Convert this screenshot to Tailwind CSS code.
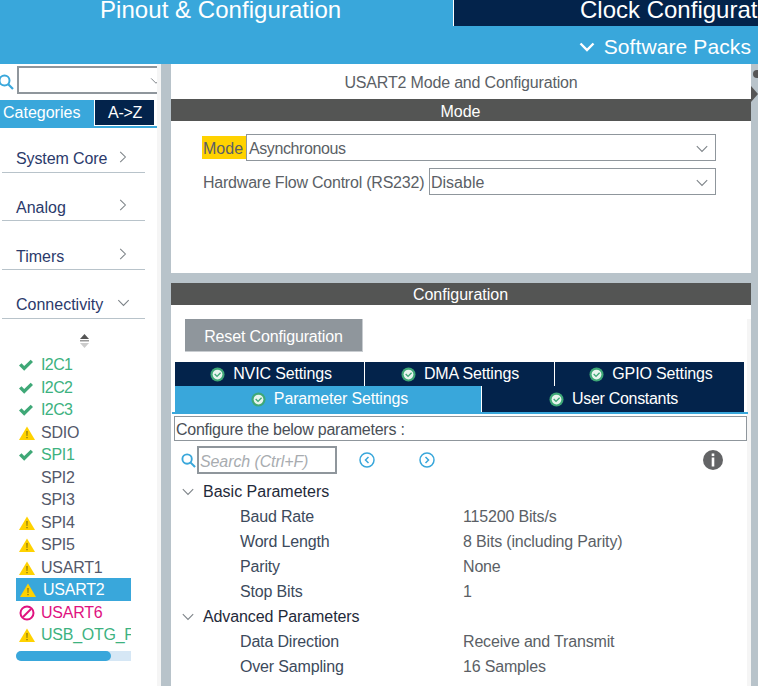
<!DOCTYPE html>
<html lang="en">
<head>
<meta charset="UTF-8">
<title>USART2 Mode and Configuration</title>
<script src="https://cdn.jsdelivr.net/npm/@tailwindcss/browser@4"></script>
</head>
<body class="w-[758px] h-[686px] overflow-hidden bg-white font-['Liberation_Sans',Arial,sans-serif] text-[16px]">
<svg class="hidden">
  <symbol id="ok" viewBox="0 0 16 16"><path d="M1 8.500l2.500-2.200 2.700 2.700 6.500-6.300 2.300 2.300-8.800 8.800z" fill="#3fa877"/></symbol>
  <symbol id="warn" viewBox="0 0 16 14"><path d="M8 0.500L16 14H0z" fill="#ffd200"/><path d="M7.400 5h1.200l-.2 5H7.600z M7.400 11h1.200v1.300H7.400z" fill="#7a6a10"/></symbol>
  <symbol id="tick" viewBox="0 0 16 16"><circle cx="8" cy="8" r="7.500" fill="#3fa877"/><circle cx="8" cy="8" r="5.200" fill="#e8f5ee"/><path d="M5 7.500l2.500 2.500 3.800-3.800" fill="none" stroke="#3fa877" stroke-width="1.500"/></symbol>
  <symbol id="down" viewBox="0 0 16 10"><path d="M1.500 1.500L8 8l6.500-6.500" fill="none" stroke="#7c8287" stroke-width="1.300"/></symbol>
  <symbol id="right" viewBox="0 0 10 16"><path d="M1.500 1.500L8 8l-6.500 6.500" fill="none" stroke="#7c8287" stroke-width="1.300"/></symbol>
  <symbol id="lens" viewBox="0 0 16 16"><circle cx="6.500" cy="6.500" r="5" fill="none" stroke="#39a7db" stroke-width="2"/><path d="M10 10l5 5" stroke="#39a7db" stroke-width="2.200"/></symbol>
</svg>

<!-- top bar -->
<header class="h-16 bg-[#39a7db] text-white">
  <div class="flex h-[26px] overflow-hidden text-[24px] leading-[20px]">
    <div class="w-[453px] pl-[100px] tracking-[0.05px]">Pinout &amp; Configuration</div>
    <div class="flex-1 border-l border-white bg-[#03234b] pl-[126px] whitespace-nowrap overflow-hidden">Clock Configuration</div>
  </div>
  <div class="flex h-[38px] items-center justify-end gap-[9px] pr-[7px] pt-[4px] text-[21px] tracking-[0.1px]">
    <svg class="w-[16px] h-[10px]" viewBox="0 0 16 10"><path d="M1.500 1.500L8 8l6.500-6.500" fill="none" stroke="#fff" stroke-width="2.400"/></svg>
    <span>Software Packs</span>
  </div>
</header>

<div class="flex h-[622px] overflow-hidden">
  <!-- sidebar -->
  <aside class="w-[161px] shrink-0 border-r-4 border-[#f5f5f5] bg-white overflow-hidden">
    <div class="flex h-[36px] items-start w-[161px]">
      <svg class="mt-[10px] ml-[-2px] w-[16px] h-[16px]"><use href="#lens"/></svg>
      <div class="ml-[3px] mt-[2px] flex h-[28px] w-[144px] items-center justify-end border-2 border-[#8f969c] overflow-hidden">
        <svg class="w-[12px] h-[8px] shrink-0 translate-x-[3px] translate-y-[1px]"><use href="#down"/></svg>
      </div>
    </div>
    <div class="flex h-[28px] w-[160px] border-b-2 border-[#39a7db] text-[16px] text-white">
      <div class="w-[94px] h-[26px] bg-[#39a7db] pl-[3px] leading-[25px]">Categories</div>
      <div class="ml-[1px] w-[59px] h-[25px] bg-[#03234b] pl-[1px] text-center leading-[25px] tracking-[-0.3px]">A-&gt;Z</div>
    </div>
    <nav class="mt-[2px] text-[#2b3a6b]">
      <div class="mx-[2px] flex h-[43px] w-[143px] items-end justify-between border-b border-[#b8c3ca] pb-[1px] pl-[14px] pr-[18px]"><span class="tracking-[-0.1px]">System Core</span><svg class="mb-[7px] w-[8px] h-[14px]"><use href="#right"/></svg></div>
      <div class="mx-[2px] flex h-[48px] w-[143px] items-end justify-between border-b border-[#b8c3ca] pl-[14px] pr-[18px]"><span>Analog</span><svg class="mb-[8px] w-[8px] h-[14px]"><use href="#right"/></svg></div>
      <div class="mx-[2px] flex h-[49px] w-[143px] items-end justify-between border-b border-[#b8c3ca] pl-[14px] pr-[18px]"><span>Timers</span><svg class="mb-[8px] w-[8px] h-[14px]"><use href="#right"/></svg></div>
      <div class="mx-[2px] flex h-[49px] w-[143px] items-end justify-between border-b border-[#b8c3ca] pb-[1px] pl-[14px] pr-[15px]"><span>Connectivity</span><svg class="mb-[10px] w-[13px] h-[8px]"><use href="#down"/></svg></div>
    </nav>
    <div class="flex h-[34px] justify-center pl-[11px] pt-[15px]">
      <svg class="w-[11px] h-[14px]" viewBox="0 0 11 14"><path d="M5.500 0L10 5H1z" fill="#555"/><rect x="1" y="6" width="9" height="1.500" fill="#999"/><path d="M1 9h9l-4.500 5z" fill="#ccc"/></svg>
    </div>
    <ul class="w-[131px] text-[16px] tracking-[-0.25px]">
      <li class="flex h-[22.500px] items-center pl-[18px] pt-[2px] text-[#3db27f] tracking-[-0.6px]"><svg class="mr-[7px] w-[16px] h-[16px]"><use href="#ok"/></svg>I2C1</li>
      <li class="flex h-[22.500px] items-center pl-[18px] pt-[2px] text-[#3db27f] tracking-[-0.6px]"><svg class="mr-[7px] w-[16px] h-[16px]"><use href="#ok"/></svg>I2C2</li>
      <li class="flex h-[22.500px] items-center pl-[18px] pt-[2px] text-[#3db27f] tracking-[-0.6px]"><svg class="mr-[7px] w-[16px] h-[16px]"><use href="#ok"/></svg>I2C3</li>
      <li class="flex h-[22.500px] items-center pl-[19px] pt-[2px] text-[#54586a]"><svg class="mr-[6px] w-[16px] h-[14px]"><use href="#warn"/></svg>SDIO</li>
      <li class="flex h-[22.500px] items-center pl-[18px] pt-[2px] text-[#3db27f]"><svg class="mr-[7px] w-[16px] h-[16px]"><use href="#ok"/></svg>SPI1</li>
      <li class="flex h-[22.500px] items-center pl-[41px] pt-[2px] text-[#54586a]">SPI2</li>
      <li class="flex h-[22.500px] items-center pl-[41px] pt-[2px] text-[#54586a]">SPI3</li>
      <li class="flex h-[22.500px] items-center pl-[19px] pt-[2px] text-[#54586a]"><svg class="mr-[6px] w-[16px] h-[14px]"><use href="#warn"/></svg>SPI4</li>
      <li class="flex h-[22.500px] items-center pl-[19px] pt-[2px] text-[#54586a]"><svg class="mr-[6px] w-[16px] h-[14px]"><use href="#warn"/></svg>SPI5</li>
      <li class="flex h-[22.500px] items-center pl-[19px] pt-[2px] text-[#54586a]"><svg class="mr-[6px] w-[16px] h-[14px]"><use href="#warn"/></svg>USART1</li>
      <li class="ml-[16px] flex h-[22.500px] items-center bg-[#39a7db] pl-[4px] pt-[2px] text-white"><svg class="mr-[7px] w-[16px] h-[14px]"><use href="#warn"/></svg>USART2</li>
      <li class="flex h-[22.500px] items-center pl-[19px] pt-[2px] text-[#e0127f]"><svg class="mr-[6px] w-[16px] h-[16px]" viewBox="0 0 16 16"><circle cx="8" cy="8" r="6.500" fill="none" stroke="#e0127f" stroke-width="2"/><path d="M4 12L12 4" stroke="#e0127f" stroke-width="2"/></svg>USART6</li>
      <li class="flex h-[22.500px] items-center overflow-hidden whitespace-nowrap pl-[19px] pt-[2px] text-[#3db27f]"><svg class="mr-[6px] w-[16px] h-[14px] shrink-0"><use href="#warn"/></svg>USB_OTG_FS</li>
    </ul>
    <div class="ml-[16px] mt-[5.500px] h-[10px] w-[115px] rounded-l-full bg-[#d6e7f5]">
      <div class="h-full w-[95px] rounded-full bg-[#39a7db]"></div>
    </div>
  </aside>

  <div class="w-[10px] shrink-0 bg-[#b8c3ca]"></div>

  <!-- main column -->
  <main class="w-[580px] shrink-0 bg-[#b8c3ca]">
    <section class="h-[209px] bg-white">
      <h2 class="h-[35px] pt-[9px] text-center text-[16px] leading-[20px] tracking-[-0.17px] text-[#5b5f66]">USART2 Mode and Configuration</h2>
      <div class="h-[22px] bg-[#545554] pr-[1px] text-center leading-[25px] text-white">Mode</div>
      <div class="flex h-[27px] items-center pl-[31px] mt-[13px] text-[#5b5f66]">
        <span class="flex h-[23px] w-[44px] items-center bg-[#ffd200] pl-[1px] pt-[2px]">Mode</span>
        <div class="flex h-[27px] w-[470px] items-center justify-between border border-[#8f969c] pl-[2px] pr-[6px] pt-[2px]"><span class="tracking-[-0.4px]">Asynchronous</span><svg class="w-[14px] h-[8px]"><use href="#down"/></svg></div>
      </div>
      <div class="flex h-[27px] items-center pl-[32px] mt-[7px] text-[#5b5f66]">
        <span class="w-[226px] whitespace-nowrap pt-[2px] tracking-[-0.22px]">Hardware Flow Control (RS232)</span>
        <div class="flex h-[27px] w-[287px] items-center justify-between border border-[#8f969c] pl-[1px] pr-[6px] pt-[2px]">Disable<svg class="w-[14px] h-[8px]"><use href="#down"/></svg></div>
      </div>
    </section>

    <section class="mt-[10px] h-[403px] bg-white overflow-hidden">
      <div class="h-[22px] bg-[#545554] pr-[1px] text-center leading-[24px] text-white">Configuration</div>
      <div class="h-[381px] border-r-4 border-[#f5f5f5]">
        <button class="ml-[14px] mt-[14px] block h-[33px] w-[178px] border-r border-b border-[#c8ccd0] bg-[#8f969c] pt-[4px] text-center text-white tracking-[-0.15px]">Reset Configuration</button>
        <div class="ml-[4px] mt-[10px] grid h-[24px] w-[569px] grid-cols-3 gap-x-px bg-white text-white tracking-[-0.15px]">
          <div class="flex items-center justify-center gap-[8px] bg-[#03234b] pl-[3px]"><svg class="w-[15px] h-[15px]"><use href="#tick"/></svg>NVIC Settings</div>
          <div class="flex items-center justify-center gap-[8px] bg-[#03234b] pl-[1px]"><svg class="w-[15px] h-[15px]"><use href="#tick"/></svg>DMA Settings</div>
          <div class="flex items-center justify-center gap-[8px] bg-[#03234b] pl-[3px]"><svg class="w-[15px] h-[15px]"><use href="#tick"/></svg>GPIO Settings</div>
        </div>
        <div class="ml-[4px] flex h-[26px] w-[569px] text-white tracking-[-0.15px]">
          <div class="flex w-[306px] items-center justify-center gap-[8px] bg-[#39a7db] pl-[3px]"><svg class="w-[15px] h-[15px]"><use href="#tick"/></svg>Parameter Settings</div>
          <div class="ml-px flex flex-1 items-center justify-center gap-[8px] bg-[#03234b] pl-[1px] tracking-[-0.3px]"><svg class="w-[15px] h-[15px]"><use href="#tick"/></svg>User Constants</div>
        </div>
        <div class="ml-px h-[2px] w-[576px] bg-[#39a7db]"></div>
        <div class="ml-[3px] mt-[2px] h-[25px] w-[573px] border border-[#8f969c] pl-[1px] leading-[25px] tracking-[-0.25px] text-[#4a4f57]">Configure the below parameters :</div>
        <div class="flex h-[28px] items-center mt-[5px] pl-[10px] pr-[24px]">
          <svg class="w-[15px] h-[15px]"><use href="#lens"/></svg>
          <div class="ml-[1px] h-[28px] w-[140px] border-2 border-[#8f969c] pl-[1px] italic leading-[28px] tracking-[-0.1px] text-[#a8acb0]">Search (Ctrl+F)</div>
          <svg class="ml-[22px] w-[16px] h-[16px]" viewBox="0 0 16 16"><circle cx="8" cy="8" r="7" fill="none" stroke="#39a7db" stroke-width="1.500"/><path d="M9.500 5L6.500 8l3 3" fill="none" stroke="#39a7db" stroke-width="1.500"/></svg>
          <svg class="ml-[44px] w-[16px] h-[16px]" viewBox="0 0 16 16"><circle cx="8" cy="8" r="7" fill="none" stroke="#39a7db" stroke-width="1.500"/><path d="M6.500 5L9.500 8l-3 3" fill="none" stroke="#39a7db" stroke-width="1.500"/></svg>
          <svg class="ml-auto w-[20px] h-[20px]" viewBox="0 0 20 20"><circle cx="10" cy="10" r="10" fill="#636466"/><rect x="8.700" y="3.500" width="2.600" height="2.600" fill="#fff"/><rect x="8.700" y="7.500" width="2.600" height="9" fill="#fff"/></svg>
        </div>
        <div class="mt-[5px] text-[#3c4a5c]">
          <div class="flex h-[25px] items-center pl-[10px] text-[#1f2a3a]"><svg class="mr-[8px] w-[14px] h-[8px]"><use href="#down"/></svg>Basic Parameters</div>
          <div class="flex h-[25px] items-center"><span class="w-[292px] pl-[69px] tracking-[-0.17px]">Baud Rate</span><span class="tracking-[-0.17px] text-[#5b5f66]">115200 Bits/s</span></div>
          <div class="flex h-[25px] items-center"><span class="w-[292px] pl-[69px] tracking-[-0.17px]">Word Length</span><span class="tracking-[-0.17px] text-[#5b5f66]">8 Bits (including Parity)</span></div>
          <div class="flex h-[25px] items-center"><span class="w-[292px] pl-[69px] tracking-[-0.17px]">Parity</span><span class="tracking-[-0.17px] text-[#5b5f66]">None</span></div>
          <div class="flex h-[25px] items-center"><span class="w-[292px] pl-[69px] tracking-[-0.17px]">Stop Bits</span><span class="tracking-[-0.17px] text-[#5b5f66]">1</span></div>
          <div class="flex h-[25px] items-center pl-[10px] text-[#1f2a3a] tracking-[-0.1px]"><svg class="mr-[8px] w-[14px] h-[8px]"><use href="#down"/></svg>Advanced Parameters</div>
          <div class="flex h-[25px] items-center"><span class="w-[292px] pl-[69px] tracking-[-0.17px]">Data Direction</span><span class="tracking-[-0.17px] text-[#5b5f66]">Receive and Transmit</span></div>
          <div class="flex h-[25px] items-center"><span class="w-[292px] pl-[69px] tracking-[-0.17px]">Over Sampling</span><span class="tracking-[-0.17px] text-[#5b5f66]">16 Samples</span></div>
        </div>
      </div>
    </section>
  </main>

  <!-- right scrollbar -->
  <div class="flex-1 bg-[#b8c3ca] pt-[4px]">
    <svg class="w-[7px] h-[36px]" viewBox="0 0 7 36"><circle cx="6" cy="6" r="4" fill="#555"/><path d="M0 18l7 8-7 8z" fill="#555"/></svg>
  </div>
</div>
</body>
</html>
